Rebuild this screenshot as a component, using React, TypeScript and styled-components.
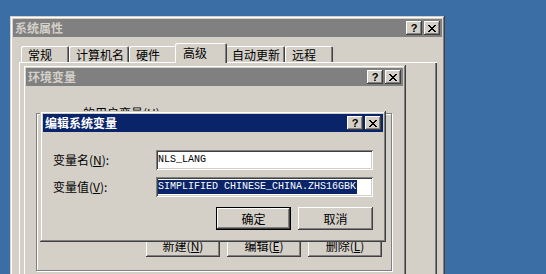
import styled, { createGlobalStyle, css } from 'styled-components';

const GlobalStyle = createGlobalStyle`
  html, body {
    margin: 0;
    padding: 0;
  }
  body {
    font-family: "Noto Sans CJK SC", "Liberation Sans", sans-serif;
    font-size: 12px;
    color: #000;
  }
`;

const raised = css`
  box-shadow: inset -1px -1px #404040, inset 1px 1px #fff, inset -2px -2px #808080,
    inset 2px 2px #d4d0c8;
`;

const sunken = css`
  box-shadow: inset 1px 1px #808080, inset -1px -1px #fff, inset 2px 2px #404040,
    inset -2px -2px #d4d0c8;
`;

const Desktop = styled.div`
  position: relative;
  width: 546px;
  height: 274px;
  overflow: hidden;
  background: #3a6ea5;
`;

const Window = styled.div<{ $left: number; $top: number; $width: number; $height: number }>`
  position: absolute;
  left: ${(p) => p.$left}px;
  top: ${(p) => p.$top}px;
  width: ${(p) => p.$width}px;
  height: ${(p) => p.$height}px;
  box-sizing: border-box;
  padding: 3px;
  display: flex;
  flex-direction: column;
  background: #d4d0c8;
  box-shadow: inset -1px -1px #404040, inset 1px 1px #d4d0c8, inset -2px -2px #808080,
    inset 2px 2px #fff;
`;

const TitleBar = styled.div<{ $active?: boolean }>`
  height: 18px;
  flex: none;
  display: flex;
  align-items: center;
  justify-content: space-between;
  padding: 0 2px;
  background: ${(p) => (p.$active ? '#0a246a' : '#808080')};
  color: ${(p) => (p.$active ? '#fff' : '#d4d0c8')};
  font-weight: 700;
  font-size: 12px;
  line-height: 18px;
  white-space: nowrap;
`;

const CaptionButtons = styled.div`
  display: flex;
  gap: 2px;
`;

const CaptionButton = styled.div`
  width: 16px;
  height: 14px;
  box-sizing: border-box;
  display: flex;
  align-items: center;
  justify-content: center;
  background: #d4d0c8;
  color: #000;
  font-family: "Liberation Sans", sans-serif;
  font-weight: 700;
  font-size: 11px;
  line-height: 14px;
  ${raised}
`;

const closeRows = ['11000011', '01100110', '00111100', '00011000', '00111100', '01100110', '11000011'];

const CloseGlyph = () => (
  <svg width="8" height="7" viewBox="0 0 8 7" shapeRendering="crispEdges">
    {closeRows.map((row, y) =>
      row.split('').map((c, x) => (c === '1' ? <rect key={`${x}-${y}`} x={x} y={y} width="1" height="1" fill="#000" /> : null))
    )}
  </svg>
);

const Caption = ({ title, active }: { title: string; active?: boolean }) => (
  <TitleBar $active={active}>
    <span>{title}</span>
    <CaptionButtons>
      <CaptionButton>?</CaptionButton>
      <CaptionButton>
        <CloseGlyph />
      </CaptionButton>
    </CaptionButtons>
  </TitleBar>
);

const Key = styled.span`
  text-decoration: underline;
`;

/* 系统属性 */
const SheetBody = styled.div`
  flex: 1;
  display: flex;
  flex-direction: column;
  padding: 6px 2px 0 6px;
`;

const TabStrip = styled.div`
  display: flex;
  align-items: flex-end;
  height: 19px;
  padding-left: 2px;
`;

const Tab = styled.div<{ $w: number; $active?: boolean }>`
  position: relative;
  box-sizing: border-box;
  width: ${(p) => p.$w}px;
  height: 16px;
  padding: 2px 0 0 7px;
  line-height: 14px;
  white-space: nowrap;
  background: #d4d0c8;
  border-radius: 2px 2px 0 0;
  box-shadow: inset 1px 1px #fff, inset -1px 0 #404040, inset -2px 0 #808080;
  ${(p) =>
    p.$active &&
    css`
      width: ${p.$w + 4}px;
      height: 20px;
      margin: 0 -2px -1px;
      padding: 3px 0 0 8px;
      z-index: 1;
    `}
`;

const TabPanel = styled.div`
  flex: 1;
  width: 418px;
  background: #d4d0c8;
  box-shadow: inset 1px 1px #fff, inset -1px -1px #404040, inset -2px -2px #808080;
`;

/* 环境变量 */
const EnvBody = styled.div`
  padding: 27px 11px 0 10px;
`;

const GroupBox = styled.div`
  position: relative;
  height: 158px;
  box-sizing: border-box;
  border: 1px solid #808080;
  box-shadow: inset 1px 1px #fff, 1px 1px #fff;
  display: flex;
  flex-direction: column;
  justify-content: flex-end;
  padding: 0 9px 13px 0;
`;

const Legend = styled.span`
  position: absolute;
  top: -8px;
  left: 44px;
  padding: 0 2px;
  line-height: 14px;
  background: #d4d0c8;
`;

const ButtonRow = styled.div`
  display: flex;
  justify-content: flex-end;
  gap: 7px;
`;

const PushButton = styled.button<{ $w?: number; $default?: boolean }>`
  width: ${(p) => p.$w ?? 75}px;
  height: 23px;
  box-sizing: border-box;
  padding: 0;
  margin: 0;
  border: ${(p) => (p.$default ? '1px solid #000' : 'none')};
  background: #d4d0c8;
  color: #000;
  font-family: inherit;
  font-size: 12px;
  line-height: 14px;
  ${raised}
`;

/* 编辑系统变量 */
const DialogBody = styled.div`
  display: flex;
  flex-direction: column;
  padding: 18px 10px 0 10px;
`;

const Field = styled.div`
  display: flex;
  align-items: center;
  height: 20px;
  & + & {
    margin-top: 7px;
  }
`;

const FieldLabel = styled.label`
  width: 103px;
  line-height: 20px;
  white-space: nowrap;
`;

const TextBox = styled.div`
  width: 217px;
  height: 20px;
  box-sizing: border-box;
  padding: 0 2px;
  background: #fff;
  font-family: "Liberation Mono", monospace;
  font-size: 10px;
  line-height: 19px;
  white-space: nowrap;
  overflow: hidden;
  ${sunken}
`;

const Selected = styled.span`
  display: inline-block;
  background: #0a246a;
  color: #fff;
  line-height: 14px;
  padding-right: 1px;
`;

const DialogButtons = styled(ButtonRow)`
  margin-top: 10px;
`;

export default function App() {
  return (
    <>
      <GlobalStyle />
      <Desktop>
        <Window $left={10} $top={16} $width={435} $height={330}>
          <Caption title="系统属性" />
          <SheetBody>
            <TabStrip>
              <Tab $w={48}>常规</Tab>
              <Tab $w={60}>计算机名</Tab>
              <Tab $w={48}>硬件</Tab>
              <Tab $w={48} $active>
                高级
              </Tab>
              <Tab $w={60}>自动更新</Tab>
              <Tab $w={48}>远程</Tab>
            </TabStrip>
            <TabPanel />
          </SheetBody>
        </Window>

        <Window $left={23} $top={65} $width={383} $height={320}>
          <Caption title="环境变量" />
          <EnvBody>
            <GroupBox>
              <Legend>
                的用户变量(<Key>U</Key>)
              </Legend>
              <ButtonRow>
                <PushButton $w={74}>
                  新建(<Key>N</Key>)
                </PushButton>
                <PushButton $w={74}>
                  编辑(<Key>E</Key>)
                </PushButton>
                <PushButton $w={74}>
                  删除(<Key>L</Key>)
                </PushButton>
              </ButtonRow>
            </GroupBox>
          </EnvBody>
        </Window>

        <Window $left={40} $top={111} $width={346} $height={131}>
          <Caption title="编辑系统变量" active />
          <DialogBody>
            <Field>
              <FieldLabel>
                变量名(<Key>N</Key>):
              </FieldLabel>
              <TextBox>NLS_LANG</TextBox>
            </Field>
            <Field>
              <FieldLabel>
                变量值(<Key>V</Key>):
              </FieldLabel>
              <TextBox>
                <Selected>SIMPLIFIED CHINESE_CHINA.ZHS16GBK</Selected>
              </TextBox>
            </Field>
            <DialogButtons>
              <PushButton $default>确定</PushButton>
              <PushButton>取消</PushButton>
            </DialogButtons>
          </DialogBody>
        </Window>
      </Desktop>
    </>
  );
}
